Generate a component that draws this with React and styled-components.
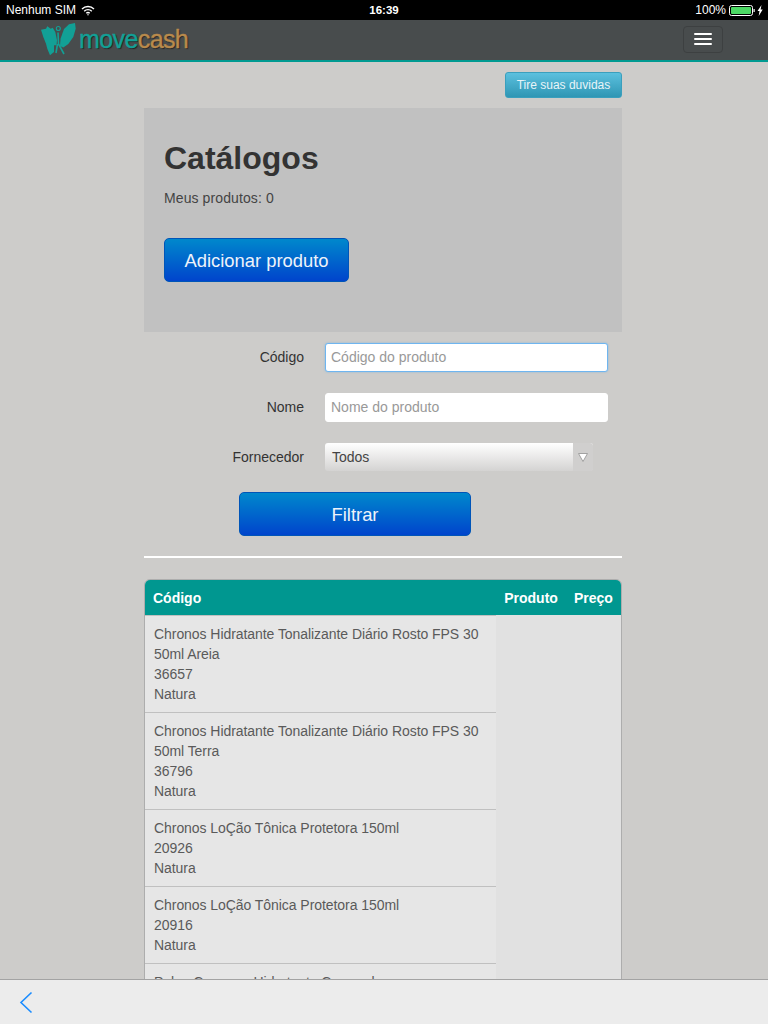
import React from "react";
import styled, { createGlobalStyle } from "styled-components";

const Global = createGlobalStyle`
  html, body { margin: 0; padding: 0; height: 1024px; overflow: hidden; background: #cdccca; }
  * { box-sizing: border-box; }
  body { font-family: "Liberation Sans", Arial, sans-serif; color: #333; }
`;

const StatusBar = styled.div`
  height: 20px; background: #000; color: #fff; display: flex; align-items: center;
  justify-content: space-between; padding: 0 5px 0 6px; font-size: 12px; position: relative;
`;
const StatusGroup = styled.div`display: flex; align-items: center; gap: ${p => p.$gap || 5}px;`;
const Clock = styled.div`position: absolute; left: 0; right: 0; text-align: center; font-weight: 700; font-size: 11.5px; pointer-events: none;`;

const NavBar = styled.div`
  height: 42px; background: #484c4d; border-bottom: 2px solid #009a91;
  display: flex; align-items: center; justify-content: space-between; padding: 0 45px 0 41px;
`;
const LogoWrap = styled.div`display: flex; align-items: center; gap: 3px; margin-top: -2px;`;
const LogoText = styled.div`
  font-size: 25px; letter-spacing: -0.6px; color: #12a096; text-shadow: 1px 1px 1px #222; line-height: 30px;
  -webkit-text-stroke: 0.4px currentColor;
  span { color: #b98a4c; }
`;
const MenuButton = styled.div`
  width: 40px; height: 27px; margin-top: -2px; border: 1px solid #3d4041; border-radius: 4px;
  display: flex; flex-direction: column; justify-content: center; align-items: center; gap: 3px;
`;
const MenuBar = styled.div`width: 18px; height: 2px; background: #fff; border-radius: 1px;`;

const Container = styled.div`width: 478px; margin-left: 144px;`;
const HelpRow = styled.div`display: flex; justify-content: flex-end; padding-top: 10px; margin-bottom: 10px;`;
const HelpButton = styled.div`
  width: 117px; height: 26px; border-radius: 3px; border: 1px solid #3a9fbd;
  background: linear-gradient(#5bc0de, #2f96b4); color: #e8f4f8; font-size: 12px;
  display: flex; align-items: center; justify-content: center;
`;
const Hero = styled.div`background: #c1c1c1; height: 224px; padding: 30px 20px 0;`;
const Title = styled.h1`margin: 0; font-size: 32px; line-height: 40px; font-weight: 700; color: #333;`;
const Sub = styled.p`margin: 10px 0 0; font-size: 14px; line-height: 20px; color: #444; letter-spacing: .1px;`;
const PrimaryButton = styled.div`
  width: ${p => p.$w}px; height: 44px; border-radius: 5px; border: 1px solid #0055b8;
  background: linear-gradient(#0088cc, #0044cc); color: #eef3fa; font-size: 18.4px; padding-top: 1px;
  display: flex; align-items: center; justify-content: center; margin-left: ${p => p.$left || 0}px;
`;
const HeroAction = styled.div`margin-top: 30px;`;

const Form = styled.div`padding-top: 10px;`;
const Row = styled.div`display: flex; align-items: center; height: 30px; margin-bottom: 20px;`;
const Label = styled.div`width: 160px; text-align: right; font-size: 14px; color: #333;`;
const Input = styled.div`
  margin-left: 21px; width: 283px; height: 29px; background: #fff; border-radius: 3px;
  border: 1px solid ${p => p.$focus ? "#6fb5ef" : "#fff"};
  box-shadow: ${p => p.$focus ? "0 0 2px rgba(82,168,236,.6)" : "none"};
  color: #999; font-size: 14px; display: flex; align-items: center; padding-left: 5px;
`;
const Select = styled.div`
  margin-left: 21px; width: 268px; height: 28px; border-radius: 3px; display: flex;
  background: linear-gradient(#fff, #d4d3d2); color: #444; font-size: 14px;
`;
const SelectValue = styled.div`flex: 1; display: flex; align-items: center; padding-left: 7px;`;
const SelectArrow = styled.div`
  width: 20px; background: #d0cfce; border-radius: 0 3px 3px 0; display: flex; align-items: center; justify-content: center;
`;
const Divider = styled.div`height: 2px; background: #fff; margin-top: 20px;`;

const Table = styled.div`
  margin-top: 21px; border: 1px solid #adadad; border-radius: 6px; background: #e1e1e1; height: 420px; overflow: hidden;
`;
const Head = styled.div`
  height: 36px; margin: -1px -1px 0; background: #009790; color: #fff; font-weight: 700; font-size: 14px;
  display: flex; align-items: center; padding: 1px 8px 0 9px; border-radius: 6px 6px 0 0;
`;
const HeadCell = styled.div`margin-left: ${p => p.$left || 0}px;`;
const Item = styled.div`
  width: 351px; background: #e6e6e6; padding: 8px 9px 8px; font-size: 14px; line-height: 20px; color: #5a5a5a;
  letter-spacing: -0.06px;
  border-top: 1px solid #c0c0c0;
`;

const BottomBar = styled.div`
  position: fixed; left: 0; right: 0; bottom: 0; height: 45px; background: #ececec;
  border-top: 1px solid #a3a3a3; display: flex; align-items: center; padding-left: 19px;
`;

const Wifi = () => (
  <svg width="14" height="11" viewBox="0 0 14 11" fill="none" stroke="#fff" strokeWidth="1.4">
    <path d="M1 4 A8.5 8.5 0 0 1 13 4" />
    <path d="M3.2 6.2 A5.4 5.4 0 0 1 10.8 6.2" />
    <path d="M5.3 8.2 A2.5 2.5 0 0 1 8.7 8.2" />
    <circle cx="7" cy="9.8" r=".7" fill="#fff" stroke="none" />
  </svg>
);
const Battery = () => (
  <svg width="34" height="11" viewBox="0 0 34 11">
    <rect x=".5" y=".5" width="23" height="10" rx="2" fill="none" stroke="#fff" />
    <rect x="2" y="2" width="20" height="7" rx="1" fill="#4cd964" />
    <rect x="24.5" y="4" width="1.2" height="3" fill="#fff" />
    <path d="M32.5 0 L28.5 6 H30.5 L29.7 11 L33.7 4.6 H31.6 Z" fill="#fff" />
  </svg>
);
const Butterfly = () => (
  <svg width="35" height="33" viewBox="0 0 35 33">
    <path fill="#12a096" d="M0 6.7 L5 5.7 L6.3 3.3 L9.7 5.7 L11.7 4.7 L14.3 9 L16 17.3 L15.5 22.3 L13 22.3 L13 29 L9 32.3 L6.3 25.7 L5 20.7 L2.3 14 Z" />
    <path fill="#12a096" d="M19.5 15.7 L23 6 L28 1.2 L34 0 L34.7 5.7 L32.3 14 L27.3 21 L22.3 24.5 L19 23 Z" />
    <circle cx="17.3" cy="5.5" r="2" fill="none" stroke="#12a096" strokeWidth="1.1" />
    <path d="M17 9.5 L17.5 21 L23 31 M16.5 21 L15 30" fill="none" stroke="#12a096" strokeWidth="1.6" />
  </svg>
);
const Chevron = () => (
  <svg width="15" height="23" viewBox="0 0 15 23" fill="none" stroke="#1a8cff" strokeWidth="1.6">
    <path d="M12.5 1.5 L2 11.5 L12.5 21.5" />
  </svg>
);
const Caret = () => (
  <svg width="12" height="11" viewBox="0 0 12 11">
    <path d="M1.5 1.5 H10.5 L6 9.5 Z" fill="#fff" stroke="#9a9a9a" strokeWidth=".9" />
  </svg>
);

const items = [
  ["Chronos Hidratante Tonalizante Diário Rosto FPS 30 50ml Areia", "36657", "Natura"],
  ["Chronos Hidratante Tonalizante Diário Rosto FPS 30 50ml Terra", "36796", "Natura"],
  ["Chronos LoÇão Tônica Protetora 150ml", "20926", "Natura"],
  ["Chronos LoÇão Tônica Protetora 150ml", "20916", "Natura"],
  ["Polpa Cremosa Hidratante Corporal"],
];

export default function App() {
  return (
    <>
      <Global />
      <StatusBar>
        <StatusGroup>Nenhum SIM <Wifi /></StatusGroup>
        <Clock>16:39</Clock>
        <StatusGroup $gap={3}>100% <Battery /></StatusGroup>
      </StatusBar>
      <NavBar>
        <LogoWrap>
          <Butterfly />
          <LogoText>move<span>cash</span></LogoText>
        </LogoWrap>
        <MenuButton><MenuBar /><MenuBar /><MenuBar /></MenuButton>
      </NavBar>
      <Container>
        <HelpRow><HelpButton>Tire suas duvidas</HelpButton></HelpRow>
        <Hero>
          <Title>Catálogos</Title>
          <Sub>Meus produtos: 0</Sub>
          <HeroAction><PrimaryButton $w={185}>Adicionar produto</PrimaryButton></HeroAction>
        </Hero>
        <Form>
          <Row><Label>Código</Label><Input $focus>Código do produto</Input></Row>
          <Row><Label>Nome</Label><Input>Nome do produto</Input></Row>
          <Row>
            <Label>Fornecedor</Label>
            <Select><SelectValue>Todos</SelectValue><SelectArrow><Caret /></SelectArrow></Select>
          </Row>
          <PrimaryButton $w={232} $left={95}>Filtrar</PrimaryButton>
        </Form>
        <Divider />
        <Table>
          <Head>
            <HeadCell>Código</HeadCell>
            <HeadCell $left={303}>Produto</HeadCell>
            <HeadCell $left={16}>Preço</HeadCell>
          </Head>
          {items.map((it, i) => (
            <Item key={i}>
              {it.map((line, j) => <div key={j}>{line}</div>)}
            </Item>
          ))}
        </Table>
      </Container>
      <BottomBar><Chevron /></BottomBar>
    </>
  );
}
